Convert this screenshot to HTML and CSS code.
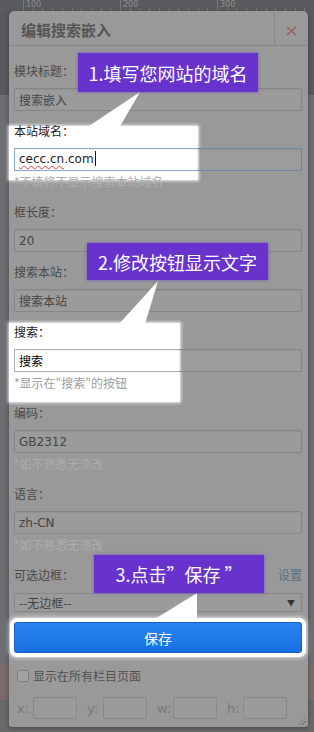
FILE: index.html
```html
<!DOCTYPE html>
<html lang="zh-CN">
<head>
<meta charset="UTF-8">
<meta name="viewport" content="width=device-width, initial-scale=1.0">
<title>编辑搜索嵌入</title>
<link rel="stylesheet" href="styles.css">
</head>
<body>
<div class="ruler">
<span class="ruler-mark">100</span>
<span class="ruler-mark">200</span>
<span class="ruler-mark">300</span>
</div>

<div class="dialog">
<div class="dialog-header">
<div class="dialog-title">编辑搜索嵌入</div>
<div class="dialog-close">
<svg width="11" height="10" viewBox="0 0 11 10"><path d="M1 1 L10 9 M10 1 L1 9" stroke="#9e5b5b" stroke-width="1.4" fill="none"/></svg>
</div>
</div>

<!-- tutorial highlights, behind the form -->
<div class="spot spot-domain"></div>
<div class="spot spot-button-text"></div>

<div class="dialog-body">
<div class="field">
<label class="field-label">模块标题：</label>
<input class="text-input" type="text" value="搜索嵌入">
</div>

<div class="field">
<label class="field-label lit">本站域名：</label>
<div class="text-input input-domain"><span class="typo">cecc.cn</span>.com<span class="caret"></span></div>
<div class="field-hint">*不填将不显示搜索本站域名</div>
</div>

<div class="field">
<label class="field-label">框长度：</label>
<input class="text-input" type="text" value="20">
</div>

<div class="field">
<label class="field-label">搜索本站：</label>
<input class="text-input" type="text" value="搜索本站">
</div>

<div class="field">
<label class="field-label lit">搜索：</label>
<input class="text-input input-button-text" type="text" value="搜索">
<div class="field-hint lit">*显示在"搜索"的按钮</div>
</div>

<div class="field">
<label class="field-label">编码：</label>
<input class="text-input" type="text" value="GB2312">
<div class="field-hint">*如不熟悉无须改</div>
</div>

<div class="field">
<label class="field-label">语言：</label>
<input class="text-input" type="text" value="zh-CN">
<div class="field-hint">*如不熟悉无须改</div>
</div>

<div class="field-row">
<label class="field-label">可选边框：</label>
<span class="link">设置</span>
</div>
<div class="select"><span>--无边框--</span><span class="select-arrow">▼</span></div>

<button class="save-button">保存</button>

<label class="check-row"><input type="checkbox" class="check">显示在所有栏目页面</label>

<div class="coords">
<div class="coord"><span>x:</span><input class="coord-input" type="text"></div>
<div class="coord"><span>y:</span><input class="coord-input" type="text"></div>
<div class="coord"><span>w:</span><input class="coord-input" type="text"></div>
<div class="coord"><span>h:</span><input class="coord-input" type="text"></div>
</div>
</div>

<svg class="tails" viewBox="0 0 299 716">
<polygon points="131,81 77,117 110,117" fill="#fff"/>
<polygon points="149,270 110,313 136,313" fill="#fff"/>
<polygon points="188,582 146,608 188,608" fill="#fff"/>
</svg>
<div class="tip tip-domain">1.填写您网站的域名</div>
<div class="tip tip-button-text">2.修改按钮显示文字</div>
<div class="tip tip-save">3.点击”保存 ”</div>

<div class="resize-grip"></div>
</div>
</body>
</html>
```

FILE: styles.css
```css
body {
margin: 0;
height: 732px;
overflow: hidden;
font-family: "Noto Sans CJK SC", "Noto Sans", sans-serif;
background: linear-gradient(to bottom, #58595d 0, #58595d 95px, #6d6e71 95px, #6d6e71 664px, #7a6a6c 664px, #7a6a6c 700px, #69696b 700px);
}
.ruler {
height: 11px;
display: flex;
padding-left: 23px;
background-color: #5a5b5f;
background-image: repeating-linear-gradient(to right, #7a7b7e 0, #7a7b7e 1px, transparent 1px, transparent 9.7px);
background-size: 100% 3px;
background-repeat: no-repeat;
background-position: 23px bottom;
}
.ruler-mark {
box-sizing: border-box;
width: 97px;
padding-left: 2px;
border-left: 1px solid #77787b;
font: 8px/9px "DejaVu Sans", sans-serif;
color: #8e8f92;
}
.dialog {
position: relative;
margin-left: 9px;
width: 299px;
height: 716px;
background: #999;
border-radius: 5px 5px 3px 3px;
box-shadow: 0 1px 4px rgba(0,0,0,0.35);
}
.dialog-header {
display: flex;
height: 34px;
border-bottom: 1px solid #878787;
}
.dialog-title {
flex: 1;
padding: 3px 0 0 12px;
font-size: 15px;
font-weight: bold;
line-height: 31px;
color: #555;
}
.dialog-close {
width: 34px;
border-left: 1px solid #878787;
display: flex;
justify-content: center;
align-items: center;
padding-top: 5px;
box-sizing: border-box;
}
.dialog-body {
position: relative;
z-index: 1;
padding: 16px 6px 0 5px;
}
.field {
margin-bottom: 11px;
}
.field-label {
display: block;
font-size: 12px;
line-height: 18px;
color: #4a4a4a;
margin-bottom: 8px;
}
.field-label.lit {
color: #1c1c1c;
}
.text-input {
display: block;
box-sizing: border-box;
width: 100%;
height: 23px;
margin: 0;
padding: 0 4px;
border: 1px solid #868686;
border-radius: 2px;
background: #9b9b9b;
font: 12px/21px "DejaVu Sans", "Noto Sans CJK SC", sans-serif;
color: #454545;
box-shadow: inset 0 1px 1px rgba(0,0,0,0.06);
outline: none;
}
.input-domain {
color: #222;
border-image: linear-gradient(to right, #88a7d6 183px, #6f87aa 183px) 1;
background: linear-gradient(to right, #fff 0, #fff 182px, #9c9c9c 185px);
}
.input-button-text {
color: #000;
border-image: linear-gradient(to right, #b0b0b0 165px, #868686 165px) 1;
background: linear-gradient(to right, #fff 0, #fff 164px, #9c9c9c 167px);
}
.typo {
text-decoration: underline wavy #e03a3a;
text-decoration-thickness: 1px;
text-underline-offset: 2px;
}
.caret {
display: inline-block;
width: 1px;
height: 15px;
margin-left: 1px;
background: #111;
vertical-align: -3px;
}
.field-hint {
font-size: 12px;
line-height: 21px;
color: #adadad;
}
.field-hint.lit {
color: #9c9c9c;
}
.field-row {
display: flex;
justify-content: space-between;
align-items: flex-start;
}
.field-row .field-label {
margin-bottom: 9px;
}
.link {
font-size: 12px;
line-height: 18px;
color: #5a7183;
}
.select {
box-sizing: border-box;
height: 19px;
display: flex;
justify-content: space-between;
align-items: center;
padding: 0 6px 0 4px;
border: 1px solid #868686;
border-radius: 2px;
background: #9b9b9b;
font-size: 12px;
color: #444;
}
.select-arrow {
font-size: 8px;
color: #333;
}
.save-button {
display: block;
width: 100%;
height: 31px;
margin-top: 10px;
border: 1px solid #1a60c4;
border-radius: 3px;
background: linear-gradient(#2a84f0, #1670e2);
color: #fff;
font-family: inherit;
font-size: 14px;
box-shadow: 0 0 0 4px #fff, 0 0 4px 5px rgba(255,255,255,0.7);
}
.check-row {
display: flex;
align-items: center;
margin-top: 14px;
padding-left: 3px;
font-size: 12px;
line-height: 18px;
color: #525252;
}
.check {
appearance: none;
width: 12px;
height: 12px;
margin: 0 4px 0 0;
border: 1px solid #7e7e7e;
border-radius: 2px;
background: #a2a2a2;
}
.coords {
display: grid;
grid-template-columns: repeat(4, 70px);
margin-top: 12px;
}
.coord {
display: flex;
align-items: center;
padding: 0 7px 0 3px;
font: 13px "DejaVu Sans", sans-serif;
color: #787878;
}
.coord span {
flex: 1;
}
.coord-input {
box-sizing: border-box;
width: 44px;
height: 22px;
margin: 0;
border: 1px solid #888;
border-radius: 2px;
background: #9b9b9b;
}
.spot {
position: absolute;
left: 0;
background: #fff;
box-shadow: 0 0 3px 1px rgba(255,255,255,0.85);
}
.spot-domain {
top: 115px;
width: 189px;
height: 54px;
}
.spot-button-text {
top: 312px;
width: 171px;
height: 79px;
}
.tails {
position: absolute;
left: 0;
top: 0;
z-index: 2;
width: 299px;
height: 716px;
pointer-events: none;
}
.tip {
position: absolute;
z-index: 2;
display: flex;
justify-content: center;
align-items: center;
background: #6833cc;
color: #fff;
font-size: 18px;
line-height: 1;
box-shadow: 0 0 3px rgba(104,51,204,0.7);
}
.tip-domain {
left: 69px;
top: 42px;
width: 180px;
height: 39px;
}
.tip-button-text {
left: 78px;
top: 232px;
width: 181px;
height: 37px;
}
.tip-save {
left: 85px;
top: 544px;
width: 170px;
height: 38px;
}
.resize-grip {
position: absolute;
right: 2px;
bottom: 2px;
width: 8px;
height: 8px;
background: repeating-linear-gradient(135deg, transparent 0, transparent 2px, #5e5e5e 2px, #5e5e5e 3px);
clip-path: polygon(100% 0, 100% 100%, 0 100%);
}
```
